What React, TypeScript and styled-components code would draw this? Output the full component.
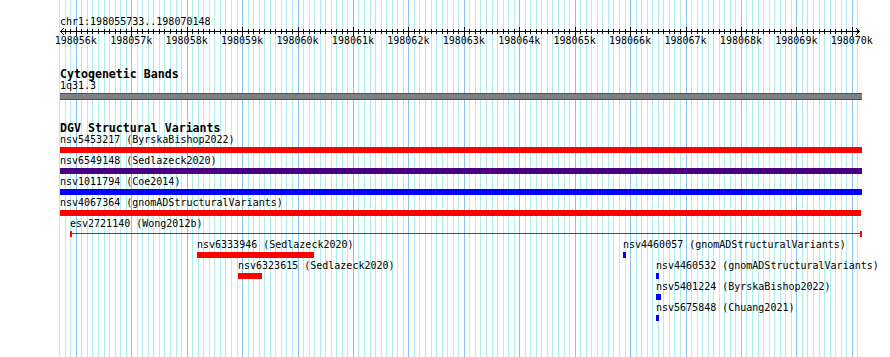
import React from 'react';
import styled, { createGlobalStyle } from 'styled-components';

const START = 198055733;
const END = 198070148;
const LEFT = 61;
const SCALE = 799 / (END - START);
const px = (bp: number) => LEFT + (bp - START) * SCALE;

const GlobalStyle = createGlobalStyle`
    html, body {
        margin: 0;
        padding: 0;
        background: #ffffff;
    }
`;

const Page = styled.div`
    position: relative;
    width: 890px;
    height: 357px;
    overflow: hidden;
    background: #ffffff;
    color: #000000;
    font-family: "DejaVu Sans Mono", "Liberation Mono", monospace;
    font-size: 10px;
`;

const GridLayer = styled.svg`
    position: absolute;
    top: 0;
    left: 0;
    z-index: 0;
`;

const Content = styled.div`
    position: relative;
    z-index: 1;
    display: flex;
    flex-direction: column;
`;

const Ruler = styled.svg`
    display: block;
    font-family: "DejaVu Sans Mono", "Liberation Mono", monospace;
    font-size: 10px;
`;

const Track = styled.section<{ $gap: number }>`
    display: flex;
    flex-direction: column;
    margin-top: ${p => p.$gap}px;
`;

const TrackTitle = styled.div`
    padding-left: 60px;
    height: 12px;
    line-height: 12px;
    font-size: 11.6px;
    font-weight: bold;
    white-space: nowrap;
`;

const Row = styled.div`
    position: relative;
    height: 21px;
`;

const Feature = styled.div`
    position: absolute;
    top: 0;
    display: flex;
    flex-direction: column;
`;

const Label = styled.div`
    height: 12px;
    line-height: 12px;
    white-space: nowrap;
`;

const Bar = styled.div<{ $color: string; $h?: number }>`
    margin-top: 1px;
    height: ${p => p.$h ?? 6}px;
    background: ${p => p.$color};
`;

const Band = styled.div`
    margin-top: 1px;
    height: 5px;
    background: #808080;
    border-top: 1px solid #505050;
    border-bottom: 1px solid #505050;
`;

const Span = styled.div`
    position: relative;
    margin-top: 1px;
    height: 6px;
`;

const SpanLine = styled.div`
    position: absolute;
    left: 0;
    right: 0;
    top: 2px;
    height: 1px;
    background: #ff0000;
`;

const SpanEnd = styled.div<{ $side: 'left' | 'right' }>`
    position: absolute;
    top: 0;
    ${p => p.$side}: 0;
    width: 2px;
    height: 6px;
    background: #ff0000;
`;

type Feat = { id: string; src: string; x: number; w: number; color: string; kind?: 'line' };

const rows: Feat[][] = [
    [{ id: 'nsv5453217', src: 'ByrskaBishop2022', x: 60, w: 802, color: '#ff0000' }],
    [{ id: 'nsv6549148', src: 'Sedlazeck2020', x: 60, w: 802, color: '#4b0082' }],
    [{ id: 'nsv1011794', src: 'Coe2014', x: 60, w: 802, color: '#0000ff' }],
    [{ id: 'nsv4067364', src: 'gnomADStructuralVariants', x: 60, w: 801, color: '#ff0000' }],
    [{ id: 'esv2721140', src: 'Wong2012b', x: 70, w: 792, color: '#ff0000', kind: 'line' }],
    [
        { id: 'nsv6333946', src: 'Sedlazeck2020', x: 197, w: 117, color: '#ff0000' },
        { id: 'nsv4460057', src: 'gnomADStructuralVariants', x: 623, w: 3, color: '#0000ff' },
    ],
    [
        { id: 'nsv6323615', src: 'Sedlazeck2020', x: 238, w: 24, color: '#ff0000' },
        { id: 'nsv4460532', src: 'gnomADStructuralVariants', x: 656, w: 3, color: '#0000ff' },
    ],
    [{ id: 'nsv5401224', src: 'ByrskaBishop2022', x: 656, w: 5, color: '#0000ff' }],
    [{ id: 'nsv5675848', src: 'Chuang2021', x: 656, w: 3, color: '#0000ff' }],
];

const hundreds: number[] = [];
for (let bp = 198055700; bp <= 198070100; bp += 100) hundreds.push(bp);
const thousands: number[] = [];
for (let bp = 198056000; bp <= 198070000; bp += 1000) thousands.push(bp);

const Grid = () => (
    <GridLayer width={890} height={357} shapeRendering="crispEdges">
        {hundreds.map(bp => {
            const x = Math.round(px(bp)) + 0.5;
            const major = bp % 1000 === 0;
            return <line key={bp} x1={x} x2={x} y1={0} y2={357} stroke={major ? '#87c4ee' : '#b0eeee'} strokeWidth={1} />;
        })}
    </GridLayer>
);

const Axis = () => (
    <Ruler width={890} height={50} shapeRendering="crispEdges">
        <text x={60} y={25} fill="#000">chr1:198055733..198070148</text>
        <line x1={60} x2={860} y1={31.5} y2={31.5} stroke="#000" />
        <polyline points="64,28 60.5,31.5 64,35" fill="none" stroke="#000" shapeRendering="auto" />
        <polyline points="856,28 859.5,31.5 856,35" fill="none" stroke="#000" shapeRendering="auto" />
        {hundreds.filter(bp => bp > START && bp < END).map(bp => {
            const x = Math.round(px(bp)) + 0.5;
            const major = bp % 1000 === 0;
            return <line key={bp} x1={x} x2={x} y1={major ? 27 : 29} y2={major ? 36 : 34} stroke="#000" />;
        })}
        {thousands.map(bp => (
            <text key={bp} x={px(bp)} y={44} textAnchor="middle" fill="#000">{`${bp / 1000}k`}</text>
        ))}
    </Ruler>
);

const FeatureView = ({ f }: { f: Feat }) => (
    <Feature style={{ left: f.x }}>
        <Label>{`${f.id} (${f.src})`}</Label>
        {f.kind === 'line' ? (
            <Span style={{ width: f.w }}>
                <SpanLine />
                <SpanEnd $side="left" />
                <SpanEnd $side="right" />
            </Span>
        ) : (
            <Bar $color={f.color} style={{ width: f.w }} />
        )}
    </Feature>
);

export default function App() {
    return (
        <>
            <GlobalStyle />
            <Page>
                <Grid />
                <Content>
                    <Axis />
                    <Track $gap={18}>
                        <TrackTitle>Cytogenetic Bands</TrackTitle>
                        <Row>
                            <Feature style={{ left: 60 }}>
                                <Label>1q31.3</Label>
                                <Band style={{ width: 802 }} />
                            </Feature>
                        </Row>
                    </Track>
                    <Track $gap={21}>
                        <TrackTitle>DGV Structural Variants</TrackTitle>
                        {rows.map((r, i) => (
                            <Row key={i}>
                                {r.map(f => <FeatureView key={f.id} f={f} />)}
                            </Row>
                        ))}
                    </Track>
                </Content>
            </Page>
        </>
    );
}
